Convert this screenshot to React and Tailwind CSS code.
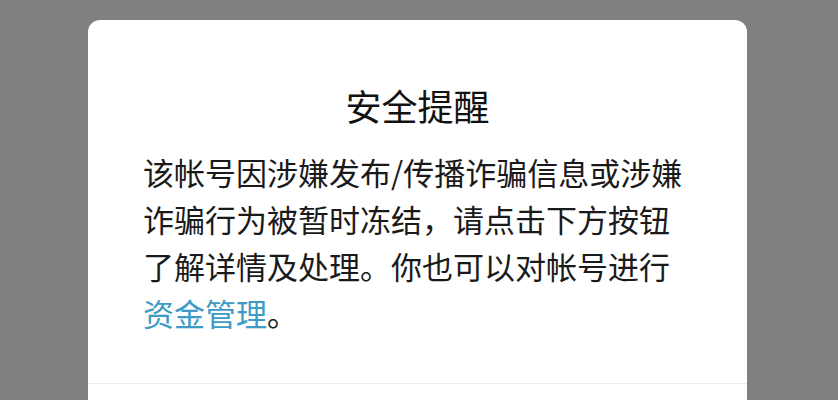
export default function App() {
  return (
    <div
      className="h-[400px] w-full overflow-hidden bg-[#808080] pt-[20px]"
      style={{ fontFamily: '"Noto Sans CJK SC", "Noto Sans", sans-serif' }}
    >
      <div className="ml-[88px] w-[659px] h-[460px] rounded-[12px] bg-white">
        {/* 标题 + 说明 */}
        <div className="px-[55px] pt-[61px] pb-[47px]">
          <h1 className="text-center text-[36px] leading-[48px] font-normal text-[#111111]">
            安全提醒
          </h1>
          <p className="mt-[19px] text-[31px] leading-[47px] text-[#1a1a1a]">
            该帐号因涉嫌发布/传播诈骗信息或涉嫌诈骗行为被暂时冻结，请点击下方按钮了解详情及处理。你也可以对帐号进行
            <span className="text-[#3d9bc6]">资金管理</span>。
          </p>
        </div>
        <div className="h-px bg-[#ececec]" />
      </div>
    </div>
  );
}
